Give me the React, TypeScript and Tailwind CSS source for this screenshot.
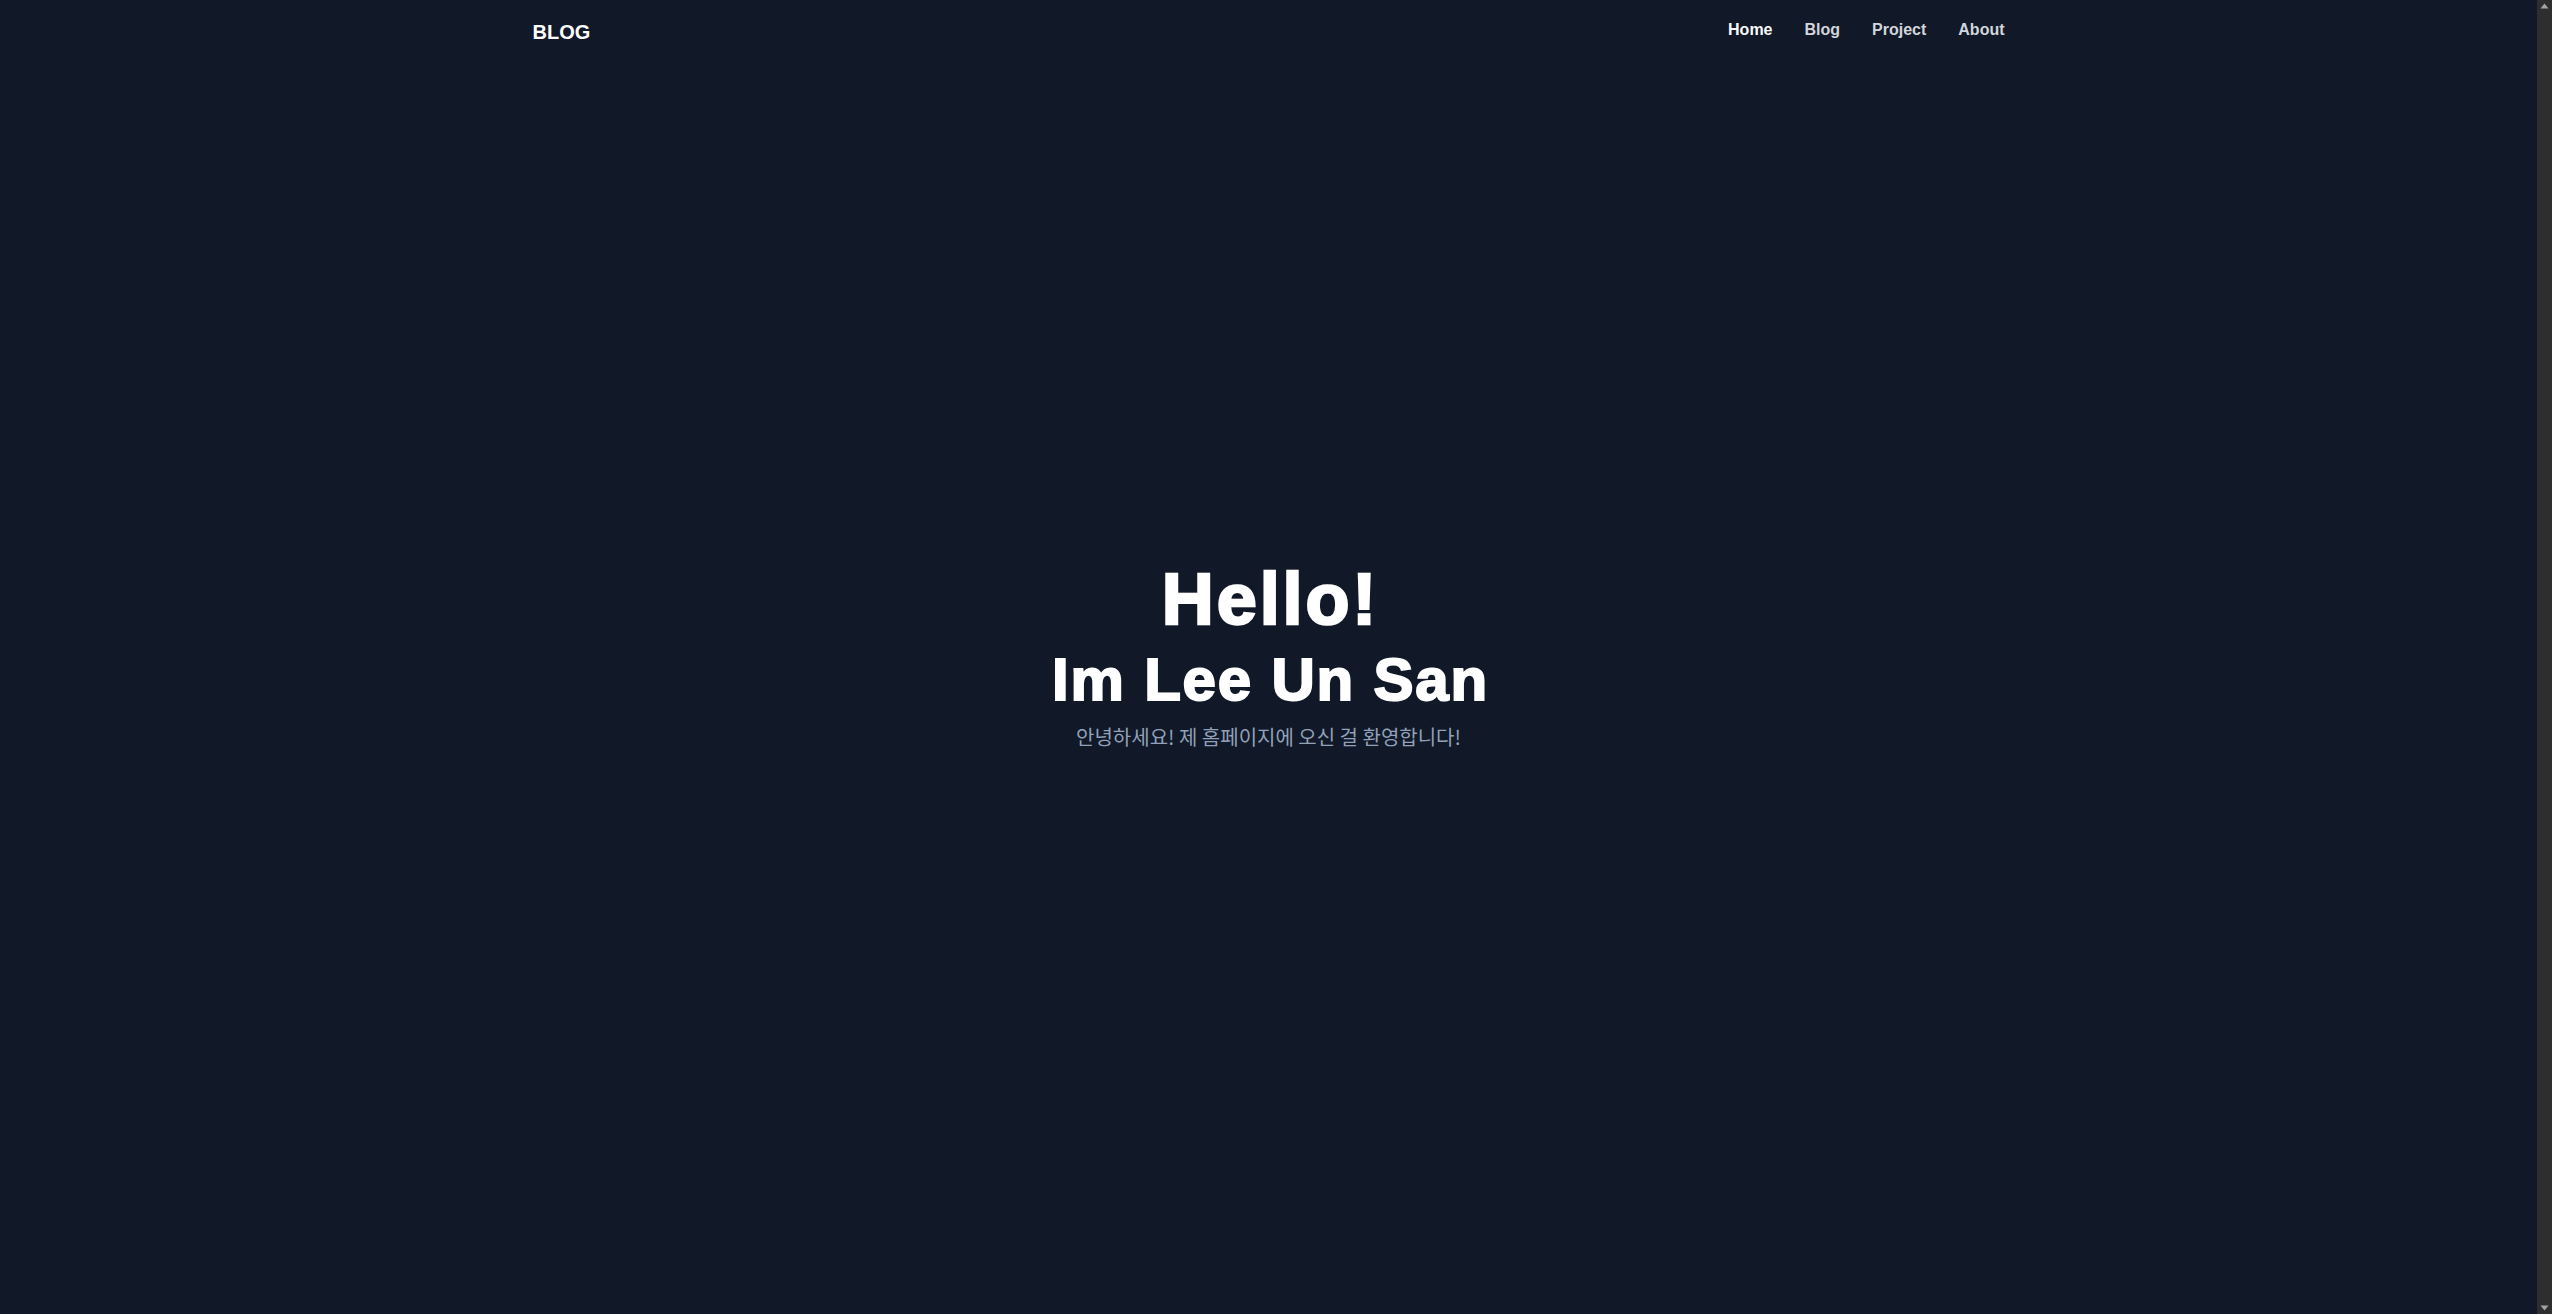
export default function App() {
  const links = [
    { label: "Home", active: true },
    { label: "Blog", active: false },
    { label: "Project", active: false },
    { label: "About", active: false },
  ];

  return (
    <div className="flex h-screen bg-[#111827] font-['Liberation_Sans','Noto_Sans_CJK_KR',sans-serif]">
      <div className="relative flex flex-1 flex-col">
        <header className="absolute inset-x-0 top-0">
          <div className="mx-auto flex max-w-[1536px] items-start justify-between px-8">
            <a href="#" className="mt-[18px] text-xl font-bold text-white">
              BLOG
            </a>
            <nav className="mt-[18px] flex gap-8">
              {links.map((link) => (
                <a
                  key={link.label}
                  href="#"
                  className={
                    link.active
                      ? "text-base font-bold text-gray-50"
                      : "text-base font-bold text-gray-300"
                  }
                >
                  {link.label}
                </a>
              ))}
            </nav>
          </div>
        </header>

        <main className="flex flex-1 flex-col items-center justify-center text-center">
          <h1 className="ml-1 text-7xl leading-none font-bold tracking-[0.04em] text-white [-webkit-text-stroke:2.5px_white]">
            Hello!
          </h1>
          <h2 className="mt-[15px] ml-1 text-6xl leading-none font-bold tracking-[0.03em] text-white [-webkit-text-stroke:2px_white]">
            Im Lee Un San
          </h2>
          <p className="mt-[13px] font-['Noto_Sans_CJK_KR',sans-serif] text-xl text-slate-400">
            안녕하세요! 제 홈페이지에 오신 걸 환영합니다!
          </p>
        </main>
      </div>

      {/* scrollbar track */}
      <div className="flex w-[15px] flex-col items-center justify-between bg-[#2e2e2e] py-[3px]">
        <svg width="9" height="6" viewBox="0 0 9 6" className="fill-[#a3a3a3]">
          <path d="M4.5 0.5 L8.5 5.5 L0.5 5.5 Z" />
        </svg>
        <svg width="9" height="6" viewBox="0 0 9 6" className="fill-[#a3a3a3]">
          <path d="M0.5 0.5 L8.5 0.5 L4.5 5.5 Z" />
        </svg>
      </div>
    </div>
  );
}
